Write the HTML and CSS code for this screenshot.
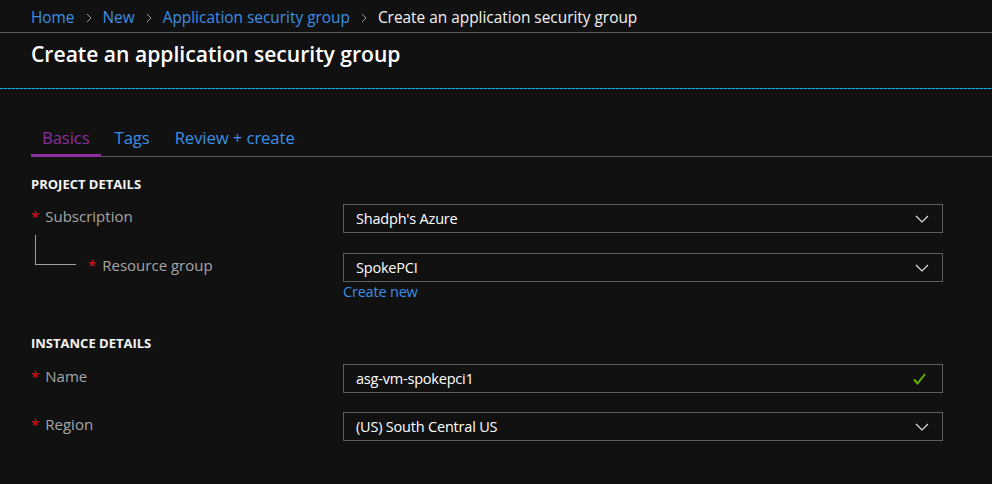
FILE: index.html
```html
<!DOCTYPE html>
<html>
<head>
<meta charset="utf-8">
<link rel="stylesheet" href="styles.css">
</head>
<body>
<nav class="breadcrumb">
  <a class="crumb">Home</a>
  <svg class="sep" width="6" height="10" viewBox="0 0 6 10"><polyline points="1,1 5,5 1,9" fill="none" stroke="#9a9a9a" stroke-width="1"/></svg>
  <a class="crumb">New</a>
  <svg class="sep" width="6" height="10" viewBox="0 0 6 10"><polyline points="1,1 5,5 1,9" fill="none" stroke="#9a9a9a" stroke-width="1"/></svg>
  <a class="crumb">Application security group</a>
  <svg class="sep" width="6" height="10" viewBox="0 0 6 10"><polyline points="1,1 5,5 1,9" fill="none" stroke="#9a9a9a" stroke-width="1"/></svg>
  <span class="current">Create an application security group</span>
</nav>
<header class="page-header">
  <h1 class="title">Create an application security group</h1>
</header>
<div class="dash-line"></div>

<div class="tabs">
  <div class="tab active">Basics</div>
  <div class="tab">Tags</div>
  <div class="tab">Review + create</div>
</div>

<section class="form">
  <h2 class="section-title first">PROJECT DETAILS</h2>
  <div class="row r1">
    <div class="label"><span class="req">*</span>Subscription</div>
    <div class="control">
      <div class="box"><span>Shadph's Azure</span>
        <svg class="chev" width="14" height="8" viewBox="0 0 14 8"><polyline points="1,1 7,7 13,1" fill="none" stroke="#e0e0e0" stroke-width="1.2"/></svg>
      </div>
    </div>
  </div>
  <div class="row r2">
    <div class="label"><span class="tree"></span><span class="req">*</span>Resource group</div>
    <div class="control">
      <div class="box"><span>SpokePCI</span>
        <svg class="chev" width="14" height="8" viewBox="0 0 14 8"><polyline points="1,1 7,7 13,1" fill="none" stroke="#e0e0e0" stroke-width="1.2"/></svg>
      </div>
      <a class="create-new">Create new</a>
    </div>
  </div>

  <h2 class="section-title second">INSTANCE DETAILS</h2>
  <div class="row r3">
    <div class="label"><span class="req">*</span>Name</div>
    <div class="control">
      <div class="box"><span>asg-vm-spokepci1</span>
        <svg class="check" width="13" height="12" viewBox="0 0 13 12"><polyline points="1,6.5 4.5,10.5 12,1" fill="none" stroke="#62b300" stroke-width="2"/></svg>
      </div>
    </div>
  </div>
  <div class="row r4">
    <div class="label"><span class="req">*</span>Region</div>
    <div class="control">
      <div class="box"><span>(US) South Central US</span>
        <svg class="chev" width="14" height="8" viewBox="0 0 14 8"><polyline points="1,1 7,7 13,1" fill="none" stroke="#e0e0e0" stroke-width="1.2"/></svg>
      </div>
    </div>
  </div>
</section>
</body>
</html>
```
FILE: styles.css
```css
html, body {
  margin: 0;
  padding: 0;
  background: #111111;
  color: #ffffff;
  font-family: "Open Sans", "Noto Sans", sans-serif;
}

.breadcrumb {
  border-bottom: 1px solid #5a5a5a;
  padding-left: 31px;
  display: flex;
  align-items: center;
  padding-top: 3px;
  height: 29px;
  font-size: 15.4px;
}
.crumb { color: #3b8fe4; }
.current { color: #f2f2f2; }
.sep { margin: 0 11px 0 11px; }

.page-header {
  height: 55px;
  padding-left: 31px;
}
.title {
  margin: 0;
  padding-top: 7px;
  font-size: 21.1px;
  line-height: 28px;
  font-weight: 600;
  color: #ffffff;
}

.dash-line {
  height: 1px;
  background: repeating-linear-gradient(to right, #1aa3e6 0 3px, #10607f 3px 4px);
}

.tabs {
  margin: 37px 0 0 31px;
  display: flex;
  border-bottom: 1px solid #555555;
}
.tab {
  padding: 0 11px 4px;
  line-height: 24px;
  font-size: 16.7px;
  color: #3b8fe4;
  border-bottom: 3px solid transparent;
  margin-bottom: -1px;
  margin-right: 3px;
  letter-spacing: -0.1px;
}
.tab.active {
  color: #8a2fa0;
  border-bottom-color: #8a2fa0;
}

.form { padding-left: 31px; }

.section-title {
  margin: 0;
  font-size: 13px;
  line-height: 20px;
  font-weight: 700;
  color: #f4f4f4;
}
.section-title.first { margin-top: 17px; }
.section-title.second { margin-top: 31px; }

.row {
  display: flex;
  align-items: flex-start;
}
.r1 { margin-top: 10px; }
.r2 { margin-top: 20px; }
.r3 { margin-top: 11px; }
.r4 { margin-top: 19px; }

.label {
  width: 312px;
  display: flex;
  align-items: flex-start;
  font-size: 15px;
  line-height: 24px;
  color: #a6a6a6;
}
.req {
  color: #e8101e;
  margin-right: 6px;
  font-size: 15px;
}
.tree {
  width: 41px;
  height: 30px;
  margin-top: -18px;
  margin-left: 4px;
  margin-right: 12px;
  border-left: 1px solid #a0a0a0;
  border-bottom: 1px solid #a0a0a0;
  box-sizing: border-box;
}

.control { width: 600px; }
.box {
  height: 27px;
  border: 1px solid #5e5e5e;
  display: flex;
  align-items: center;
  justify-content: space-between;
  padding: 0 12px 0 12px;
  font-size: 14.5px;
  color: #ffffff;
  letter-spacing: -0.2px;
}
.chev { margin-right: 1px; }
.check { margin-right: 4px; }
.create-new {
  display: block;
  color: #3b8fe4;
  font-size: 14.5px;
  line-height: 20px;
  letter-spacing: -0.2px;
}
```
